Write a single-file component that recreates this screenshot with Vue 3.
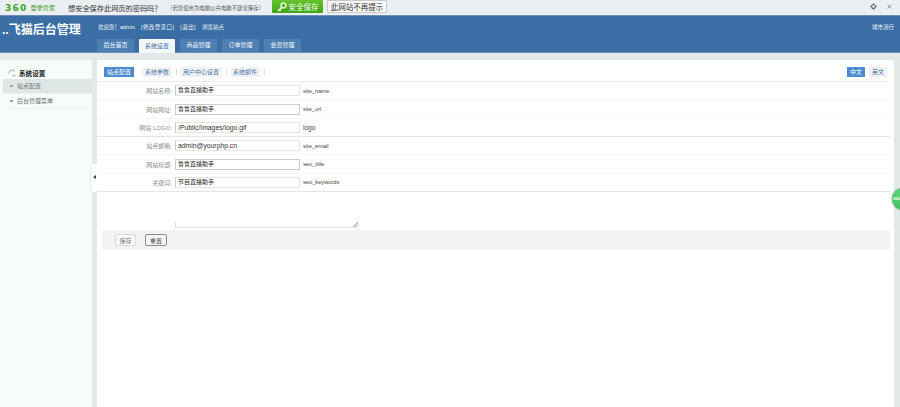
<script setup>
const tabs = ['后台首页', '系统设置', '商品管理', '订单管理', '会员管理']
const subs = ['站点配置', '系统参数', '用户中心设置', '系统邮件']
const rows = [
  { label: '网站名称:', value: '鲁鲁直播助手', key: 'site_name', cjk: true },
  { label: '网站网址:', value: '鲁鲁直播助手', key: 'site_url', cjk: true, dark: true },
  { label: '网站 LOGO:', value: '/Public/Images/logo.gif', key: 'logo', big: true },
  { label: '站点邮箱:', value: 'admin@yourphp.cn', key: 'site_email' },
  { label: '网站标题:', value: '鲁鲁直播助手', key: 'seo_title', cjk: true, dark: true },
  { label: '关键词:', value: '节目直播助手', key: 'seo_keywords', cjk: true },
]
</script>

<template>
  <div class="page">
    <div class="notice">
      <div class="brand"><b>360</b><span>登录管家</span></div>
      <span class="ask">想安全保存此网页的密码吗？</span>
      <span class="hint">（若您使用为电脑公共电脑不建议保存）</span>
      <button class="save">
        <svg width="10" height="10" viewBox="0 0 10 10"><path d="M1 9 L5 5 M2.5 7.5 L3.8 8.8 M6.5 1 a2.5 2.5 0 1 1 -0.1 0" fill="none" stroke="#fff" stroke-width="1.4"/></svg>
        安全保存
      </button>
      <button class="never">此网站不再提示</button>
      <div class="tools">
        <svg width="7" height="7" viewBox="0 0 8 8"><circle cx="4" cy="4" r="2.2" fill="none" stroke="#6c7684" stroke-width="1.4"/><path d="M4 0v1.5M4 6.5V8M0 4h1.5M6.5 4H8" stroke="#6c7684" stroke-width="1"/></svg>
        <svg width="5" height="5" viewBox="0 0 7 7"><path d="M1 1l5 5M6 1L1 6" stroke="#6c7684" stroke-width="1.2"/></svg>
      </div>
    </div>

    <header class="head">
      <div class="head-top">
        <h1>..飞猫后台管理</h1>
        <div class="welcome">
          <span>欢迎您！admin</span><span class="wide">[修改登录口]</span><span class="wide">[退出]</span><span>浏览站点</span>
        </div>
        <span class="lang">城市流行</span>
      </div>
      <nav class="tabs">
        <a v-for="(t, i) in tabs" :key="t" class="tab" :class="{ on: i === 1 }">{{ t }}</a>
      </nav>
    </header>

    <div class="body">
      <aside class="side">
        <div class="side-title">
          <svg width="10" height="10" viewBox="0 0 12 10"><path d="M1 6a4 4 0 0 1 7-3M9 7a3 3 0 0 1-4 1" fill="none" stroke="#b5bcc2" stroke-width="1.4"/></svg>
          <b>系统设置</b>
        </div>
        <div class="side-item on"><i></i>站点配置</div>
        <div class="side-item"><i></i>后台管理菜单</div>
      </aside>

      <div class="gutter">
        <span class="toggle"></span>
      </div>

      <main class="main">
        <div class="subbar">
          <div class="subs">
            <a v-for="(s, i) in subs" :key="s" class="sub" :class="{ on: i === 0 }">{{ s }}</a>
          </div>
          <div class="langs"><a class="lg on">中文</a><a class="lg">英文</a></div>
        </div>
        <div class="form">
          <div v-for="(r, i) in rows" :key="r.key" class="row" :class="{ strong: i === 2 || i === 5 }">
            <label>{{ r.label }}</label>
            <div class="input" :class="{ cjk: r.cjk, dark: r.dark }">{{ r.value }}</div>
            <span class="key" :class="{ big: r.big }">{{ r.key }}</span>
          </div>
          <div class="textarea-row">
            <div class="textarea">
              <svg class="grip" width="5" height="5" viewBox="0 0 5 5"><path d="M0 5L5 0M2.5 5L5 2.5" stroke="#777" stroke-width=".8"/></svg>
            </div>
          </div>
        </div>
        <div class="actions">
          <button class="btn">保存</button>
          <button class="btn dark">重置</button>
        </div>
      </main>
      <div class="right"></div>
    </div>
    <div class="float">360</div>
  </div>
</template>

<style>
html, body { margin: 0; background: #fff; overflow: hidden; }
</style>

<style scoped>
.page {
  position: relative;
  width: 900px;
  height: 407px;
  overflow: hidden;
  font-family: "Liberation Sans", "Noto Sans CJK SC", sans-serif;
  display: flex;
  flex-direction: column;
}
.notice {
  height: 15px;
  flex: none;
  background: #ebeff4;
  display: flex;
  align-items: center;
  font-size: 8px;
  color: #333;
  white-space: nowrap;
}
.brand { width: 68px; padding-left: 5px; box-sizing: border-box; display: flex; align-items: center; gap: 3px; color: #4a9a2c; font-size: 6.2px; }
.brand b { font-size: 9px; letter-spacing: 1.2px; color: #3da52a; font-family: "DejaVu Sans", sans-serif; }
.ask { font-size: 7.2px; width: 99px; }
.hint { font-size: 5.4px; color: #555; width: 105px; }
.save {
  width: 51px; height: 13px; padding: 0; border: 0; border-radius: 1px;
  background: linear-gradient(#66c52a, #3fa514);
  color: #fff; font: 7.5px "Liberation Sans", "Noto Sans CJK SC", sans-serif;
  display: flex; align-items: center; justify-content: center; gap: 2px;
  margin-top: -2px;
}
.never {
  margin-left: 4px; width: 60px; height: 13px; padding: 0; margin-top: -2px;
  background: #fafafa; border: 1px solid #c9c9c9; border-radius: 1px;
  color: #333; font: 7.5px "Liberation Sans", "Noto Sans CJK SC", sans-serif;
}
.tools { margin-left: auto; padding-right: 8px; display: flex; align-items: center; gap: 10px; margin-top: -3px; }
.head {
  flex: none;
  height: 38px;
  box-sizing: border-box;
  background: #3b6ea5;
  border-top: 1px solid #6d90ba;
  border-bottom: 1px solid #6d90ba;
}
.head-top { display: flex; align-items: flex-start; height: 23px; }
h1 { margin: 8px 0 0; width: 98px; padding-left: 2px; box-sizing: border-box; font-size: 12px; line-height: 13px; color: #fff; font-weight: 700; white-space: nowrap; }
.welcome { display: flex; gap: 6px; margin-top: 8px; line-height: 7px; font-size: 5.5px; color: #f2f6fa; white-space: nowrap; }
.wide { letter-spacing: .4px; }
.lang { margin-left: auto; margin-top: 8px; line-height: 7px; padding-right: 6px; font-size: 5.5px; color: #f2f8fd; }
.tabs { display: flex; gap: 5px; padding-left: 97px; height: 14px; }
.tab {
  width: 37px; height: 13px; background: #4d7fb3; color: #f0f5fa;
  font-size: 6px; line-height: 13px; text-align: center; border-radius: 1px 1px 0 0;
}
.tab.on { background: #f5f8f8; color: #3b6ea5; height: 15px; line-height: 14px; width: 36px; }
.body { flex: 1; display: flex; background: #e3e9e9; min-height: 0; padding-top: 7px; }
.side { width: 92px; flex: none; padding-top: 6px; box-sizing: border-box; background: #f8fbfb; }
.side-title { height: 13px; display: flex; align-items: center; gap: 1px; padding-left: 8px; font-size: 6.6px; color: #222; }
.side-item { height: 14px; margin-left: 3px; line-height: 14px; font-size: 6px; color: #6b7678; border-bottom: 1px solid #eef1f1; padding-left: 7px; display: flex; align-items: center; gap: 4px; }
.side-item.on { background: #dfe6e6; }
.side-item i { width: 3px; height: 2px; background: #9aa6a8; }
.gutter { width: 5px; flex: none; position: relative; background: #e3e9e9; }
.toggle {
  position: absolute; left: -1px; top: 104px; width: 6px; height: 28px;
  background: #fff; border-radius: 3px 0 0 3px; box-shadow: -1px 0 0 #e8ecec;
}
.toggle::after {
  content: ""; position: absolute; left: 2px; top: 11px;
  border-style: solid; border-width: 2.5px 3px 2.5px 0;
  border-color: transparent #444 transparent transparent;
}
.main { flex: 1; background: #fff; min-width: 0; padding-top: 7px; }
.right { width: 6px; flex: none; background: #e3e9e9; }
.subbar { height: 14px; display: flex; justify-content: space-between; align-items: flex-start; padding: 0 7px; }
.subs { display: flex; }
.sub {
  padding: 0 3px; height: 10px; line-height: 10px; font-size: 6px; color: #4d78a8; background: #f1f3f5;
  margin-right: 8px; position: relative; white-space: nowrap;
}
.sub.on { background: #4a8bd0; color: #fff; }
.sub:not(.on)::after { content: ""; position: absolute; right: -5px; top: 2px; height: 6px; width: 1px; background: #d8dcdf; }
.langs { display: flex; gap: 4px; }
.lg { width: 18px; height: 10px; line-height: 10px; text-align: center; font-size: 6px; color: #3b6ea5; background: #f0f1f2; }
.lg.on { background: #4a8bd0; color: #fff; }
.form { border-top: 1px solid #ededed; margin-right: 4px; }
.row {
  height: 18.35px; display: flex; align-items: center;
  border-bottom: 1px solid #f6f6f6; box-sizing: border-box;
  font-size: 6px;
}
.row.strong { border-bottom: 1px solid #e6e6e6; }
.row label { width: 78px; text-align: right; color: #8b8f93; padding-right: 3px; box-sizing: border-box; white-space: nowrap; }
.input {
  width: 125px; height: 11px; box-sizing: border-box; border: 1px solid #e6e6e6;
  border-left-color: #ccc;
  font-size: 6.8px; line-height: 9px; padding-left: 2px; color: #333; white-space: nowrap; overflow: hidden;
}
.input.cjk { font-size: 6px; color: #222; }
.input.dark { border-color: #ccc; }
.key { margin-left: 3px; color: #444; font-size: 5.7px; }
.key.big { font-size: 6.5px; }
.textarea-row { height: 38px; padding: 0 0 2px 78px; box-sizing: border-box; display: flex; align-items: flex-end; }
.textarea { width: 183px; height: 6px; box-sizing: border-box; border-left: 1px solid #ddd; border-bottom: 1px solid #e4e4e4; position: relative; }
.grip { position: absolute; right: 0; bottom: 0; }
.actions {
  margin: 0 4px 0 5px; height: 20px; background: #f4f4f4;
  display: flex; align-items: center; gap: 9px; padding-left: 13px;
}
.btn {
  width: 21px; height: 12px; padding: 0; background: #f7f7f7;
  border: 1px solid #dcdcdc; border-radius: 2px;
  font: 6px "Liberation Sans", "Noto Sans CJK SC", sans-serif; color: #777;
}
.btn.dark { width: 22px; border-color: #8a8a8a; color: #444; }
.float {
  position: absolute; right: -14px; top: 188px; width: 22px; height: 22px; border-radius: 50%;
  background: radial-gradient(circle at 40% 30%, #5ad67c, #35b957); box-shadow: 0 0 2px #666;
  color: #fff; font-size: 4px; font-weight: 700; line-height: 22px; padding-left: 1px; box-sizing: border-box; white-space: nowrap;
}
</style>
